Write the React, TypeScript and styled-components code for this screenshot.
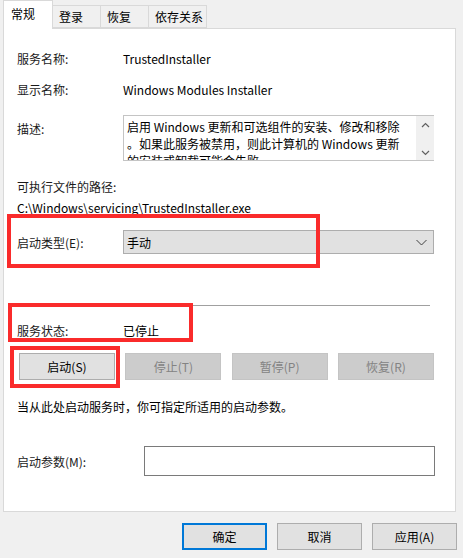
import React from "react";
import styled, { createGlobalStyle } from "styled-components";

const Global = createGlobalStyle`
  html, body { margin: 0; padding: 0; background: #f0f0f0; }
  body {
    font-family: "Noto Sans CJK SC", "Noto Sans", sans-serif;
    font-size: 12px;
    color: #1a1a1a;
  }
`;

const Window = styled.div`
  width: 463px;
  height: 558px;
  background: #f0f0f0;
  display: flex;
  flex-direction: column;
  box-sizing: border-box;
`;

const TabStrip = styled.div`
  display: flex;
  align-items: flex-end;
  height: 28px;
  padding-left: 3px;
  position: relative;
  z-index: 1;
`;

const Tab = styled.div<{ $active?: boolean; $w: number }>`
  box-sizing: border-box;
  width: ${(p) => p.$w}px;
  height: ${(p) => (p.$active ? 29 : 23)}px;
  margin-bottom: ${(p) => (p.$active ? -1 : 0)}px;
  background: ${(p) => (p.$active ? "#ffffff" : "#f0f0f0")};
  border: 1px solid #d9d9d9;
  border-bottom: ${(p) => (p.$active ? "none" : "1px solid #d9d9d9")};
  border-left: ${(p) => (p.$active ? "1px solid #d9d9d9" : "none")};
  display: flex;
  align-items: center;
  padding: ${(p) => (p.$active ? "0 0 3px 7px" : "0 0 0 6px")};
  color: #000;
`;

const Panel = styled.div`
  box-sizing: border-box;
  margin-left: 3px;
  width: 453px;
  height: 484px;
  background: #ffffff;
  border: 1px solid #d9d9d9;
  display: flex;
  flex-direction: column;
  padding: 0 0 0 13px;
`;

const Row = styled.div<{ $mt: number; $h: number; $top?: boolean }>`
  position: relative;
  display: flex;
  align-items: ${(p) => (p.$top ? "flex-start" : "center")};
  margin-top: ${(p) => p.$mt}px;
  height: ${(p) => p.$h}px;
  flex-shrink: 0;
`;

const Label = styled.div<{ $w?: number; $pt?: number }>`
  width: ${(p) => p.$w ?? 106}px;
  flex-shrink: 0;
  padding-top: ${(p) => p.$pt ?? 0}px;
  white-space: nowrap;
`;

const Value = styled.div`
  white-space: nowrap;
  color: #000;
`;

const DescBox = styled.div`
  box-sizing: border-box;
  width: 311px;
  height: 46px;
  border: 1px solid #c4c4c4;
  border-right: none;
  display: flex;
  overflow: hidden;
`;

const DescText = styled.div`
  flex: 1;
  padding: 2px 0 0 3px;
  line-height: 17px;
  white-space: nowrap;
  overflow: hidden;
  color: #000;
`;

const ScrollBar = styled.div`
  width: 18px;
  background: #f0f0f0;
  display: flex;
  flex-direction: column;
  justify-content: space-between;
  align-items: center;
  padding: 6px 0 4px;
`;

const Select = styled.div`
  box-sizing: border-box;
  width: 311px;
  height: 24px;
  background: #e1e1e1;
  border: 1px solid #adadad;
  display: flex;
  align-items: center;
  justify-content: space-between;
  padding: 0 6px 0 3px;
  color: #000;
`;

const Separator = styled.div`
  margin-top: 51px;
  width: 413px;
  height: 1px;
  background: #a0a0a0;
  flex-shrink: 0;
`;

const ButtonRow = styled.div`
  display: flex;
  justify-content: space-between;
  margin-top: 13px;
  margin-left: 2px;
  width: 415px;
  height: 27px;
  flex-shrink: 0;
  position: relative;
`;

const Btn = styled.div<{ $disabled?: boolean; $w?: number; $default?: boolean }>`
  box-sizing: border-box;
  width: ${(p) => p.$w ?? 96}px;
  height: 27px;
  display: flex;
  align-items: center;
  justify-content: center;
  background: ${(p) => (p.$disabled ? "#cccccc" : "#e1e1e1")};
  border: ${(p) =>
    p.$default ? "2px solid #0078d7" : p.$disabled ? "1px solid #c4c4c4" : "1px solid #adadad"};
  color: ${(p) => (p.$disabled ? "#838383" : "#000")};
`;

const TextInput = styled.div`
  box-sizing: border-box;
  width: 291px;
  height: 30px;
  border: 1px solid #7a7a7a;
  background: #fff;
`;

const Footer = styled.div`
  display: flex;
  justify-content: flex-end;
  gap: 10px;
  padding: 11px 6px 0 0;
`;

const Highlight = styled.div<{ $l: number; $t: number; $w: number; $h: number }>`
  position: absolute;
  left: ${(p) => p.$l}px;
  top: ${(p) => p.$t}px;
  width: ${(p) => p.$w}px;
  height: ${(p) => p.$h}px;
  box-sizing: border-box;
  border: 4px solid #fa2b2b;
  pointer-events: none;
`;

const Chevron = ({ dir }: { dir: "up" | "down" }) => (
  <svg width="9" height="6" viewBox="0 0 9 6">
    <path
      d={dir === "up" ? "M1 5 L4.5 1.5 L8 5" : "M1 1 L4.5 4.5 L8 1"}
      fill="none"
      stroke="#606060"
      strokeWidth="1.2"
    />
  </svg>
);

const DropChevron = () => (
  <svg width="11" height="7" viewBox="0 0 11 7">
    <path d="M0.5 1 L5.5 6 L10.5 1" fill="none" stroke="#404040" strokeWidth="1" />
  </svg>
);

export default function App() {
  return (
    <Window>
      <Global />
      <TabStrip>
        <Tab $active $w={50}>常规</Tab>
        <Tab $w={48}>登录</Tab>
        <Tab $w={48}>恢复</Tab>
        <Tab $w={58}>依存关系</Tab>
      </TabStrip>
      <Panel>
        <Row $mt={19} $h={20}>
          <Label>服务名称:</Label>
          <Value>TrustedInstaller</Value>
        </Row>
        <Row $mt={11} $h={20}>
          <Label>显示名称:</Label>
          <Value>Windows Modules Installer</Value>
        </Row>
        <Row $mt={16} $h={46} $top>
          <Label $pt={5}>描述:</Label>
          <DescBox>
            <DescText>
              启用 Windows 更新和可选组件的安装、修改和移除
              <br />
              。如果此服务被禁用，则此计算机的 Windows 更新
              <br />
              的安装或卸载可能会失败
            </DescText>
            <ScrollBar>
              <Chevron dir="up" />
              <Chevron dir="down" />
            </ScrollBar>
          </DescBox>
        </Row>
        <Row $mt={15} $h={20}>
          <Label>可执行文件的路径:</Label>
        </Row>
        <Row $mt={1} $h={20}>
          <Value>C:\Windows\servicing\TrustedInstaller.exe</Value>
        </Row>
        <Row $mt={13} $h={24}>
          <Label>启动类型(E):</Label>
          <Select>
            <span>手动</span>
            <DropChevron />
          </Select>
          <Highlight $l={-10} $t={-16} $w={313} $h={54} />
        </Row>
        <Separator />
        <Row $mt={14} $h={20}>
          <Label>服务状态:</Label>
          <Value>已停止</Value>
          <Highlight $l={-9} $t={-17} $w={185} $h={39} />
        </Row>
        <ButtonRow>
          <Btn>启动(S)</Btn>
          <Btn $disabled>停止(T)</Btn>
          <Btn $disabled>暂停(P)</Btn>
          <Btn $disabled>恢复(R)</Btn>
          <Highlight $l={-9} $t={-7} $w={110} $h={42} />
        </ButtonRow>
        <Row $mt={16} $h={20}>
          <Value>当从此处启动服务时，你可指定所适用的启动参数。</Value>
        </Row>
        <Row $mt={30} $h={30}>
          <Label $w={127}>启动参数(M):</Label>
          <TextInput />
        </Row>
      </Panel>
      <Footer>
        <Btn $w={85} $default>确定</Btn>
        <Btn $w={85}>取消</Btn>
        <Btn $w={85}>应用(A)</Btn>
      </Footer>
    </Window>
  );
}
